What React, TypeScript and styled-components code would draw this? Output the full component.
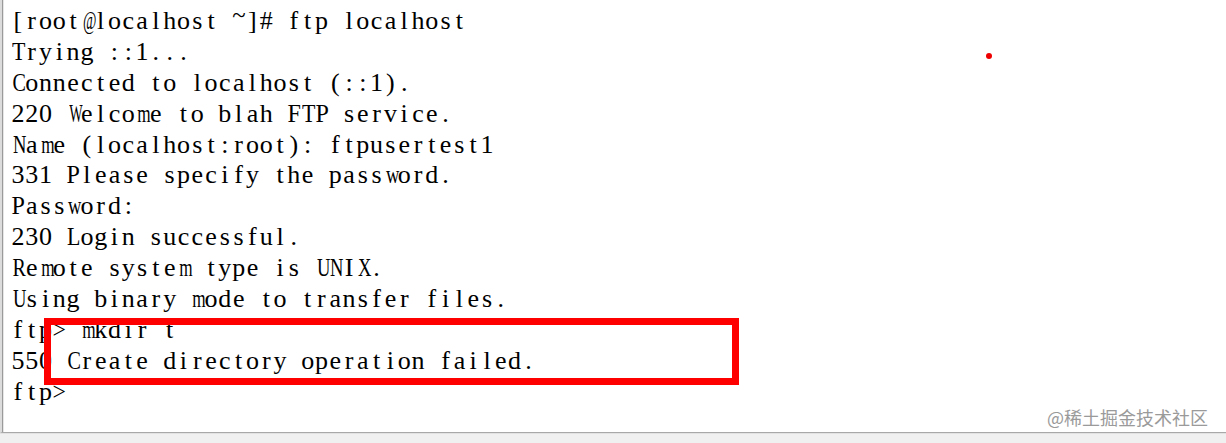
import React from "react";
import styled, { createGlobalStyle } from "styled-components";

const Global = createGlobalStyle`
  html, body { margin: 0; padding: 0; background: #ffffff; }
  #root { width: 1226px; height: 443px; }
`;

const Window = styled.div`
  position: relative;
  width: 1226px;
  height: 443px;
  display: flex;
  flex-direction: column;
  background: #f0f0f0;
  overflow: hidden;
`;

const Screen = styled.div`
  flex: 0 0 433px;
  background: #ffffff;
  border-left: 2px solid #dcdcdc;
  border-bottom: 1px solid #a8a8a8;
  box-shadow: inset 1px 0 0 #9a9a9a, inset 2px 0 0 #e6e6e6;
  padding: 6px 0 0 9px;
  box-sizing: border-box;
`;

const Footer = styled.div`
  flex: 1;
  border-top: 1px solid #e2e2e2;
  background: #f0f0f0;
`;

const Line = styled.div`
  display: flex;
  font-family: "Liberation Serif", "DejaVu Serif", serif;
  font-size: 26px;
  line-height: 30.9px;
  height: 30.9px;
  color: #000000;
  white-space: pre;
`;

const Cell = styled.span<{ $raised?: boolean; $scale: number }>`
  display: inline-block;
  width: 13.8px;
  text-align: center;
  position: relative;
  top: ${(p) => (p.$raised ? "-6px" : "0")};
  transform: scaleX(${(p) => p.$scale});
`;

const Highlight = styled.div`
  position: absolute;
  left: 44px;
  top: 318px;
  width: 695px;
  height: 67px;
  box-sizing: border-box;
  border: 7px solid #ff0000;
`;

const Dot = styled.div`
  position: absolute;
  left: 986px;
  top: 53px;
  width: 6px;
  height: 6px;
  border-radius: 50%;
  background: #ee0000;
`;

const Watermark = styled.div`
  position: absolute;
  right: 18px;
  top: 405px;
  font-family: "Noto Sans CJK SC", "Noto Sans", sans-serif;
  font-size: 18px;
  line-height: 24px;
  color: #9a9a9a;
  text-shadow: 0 0 1px #ffffff;
`;

const widths: Record<string, number> = {
  m: 0.778, w: 0.722, M: 0.889, W: 0.944, "@": 0.921, N: 0.722, U: 0.722,
  H: 0.722, D: 0.722, X: 0.722, A: 0.722, O: 0.722, G: 0.722, K: 0.722,
  C: 0.667, R: 0.667, B: 0.667, V: 0.722, Y: 0.722, Q: 0.722, T: 0.611,
  E: 0.611, L: 0.611, F: 0.556, P: 0.556, ">": 0.564, "~": 0.541,
  n: 0.5, o: 0.5, h: 0.5, d: 0.5, b: 0.5, p: 0.5, u: 0.5, y: 0.5, g: 0.5,
  k: 0.5, v: 0.5, x: 0.5, "0": 0.5, "1": 0.5, "2": 0.5, "3": 0.5, "5": 0.5,
};

const FONT = 26;
const scaleFor = (c: string) => {
  const w = widths[c];
  if (!w) return 1;
  return Math.min(1, 13.4 / (w * FONT));
};

const lines = [
  "[root@localhost ~]# ftp localhost",
  "Trying ::1...",
  "Connected to localhost (::1).",
  "220 Welcome to blah FTP service.",
  "Name (localhost:root): ftpusertest1",
  "331 Please specify the password.",
  "Password:",
  "230 Login successful.",
  "Remote system type is UNIX.",
  "Using binary mode to transfer files.",
  "ftp> mkdir t",
  "550 Create directory operation failed.",
  "ftp>",
];

export default function App() {
  return (
    <>
      <Global />
      <Window>
        <Screen>
          {lines.map((l, i) => (
            <Line key={i}>
              {Array.from(l).map((c, j) => (
                <Cell key={j} $raised={c === "~"} $scale={scaleFor(c)}>
                  {c}
                </Cell>
              ))}
            </Line>
          ))}
        </Screen>
        <Footer />
        <Highlight />
        <Dot />
        <Watermark>@稀土掘金技术社区</Watermark>
      </Window>
    </>
  );
}
